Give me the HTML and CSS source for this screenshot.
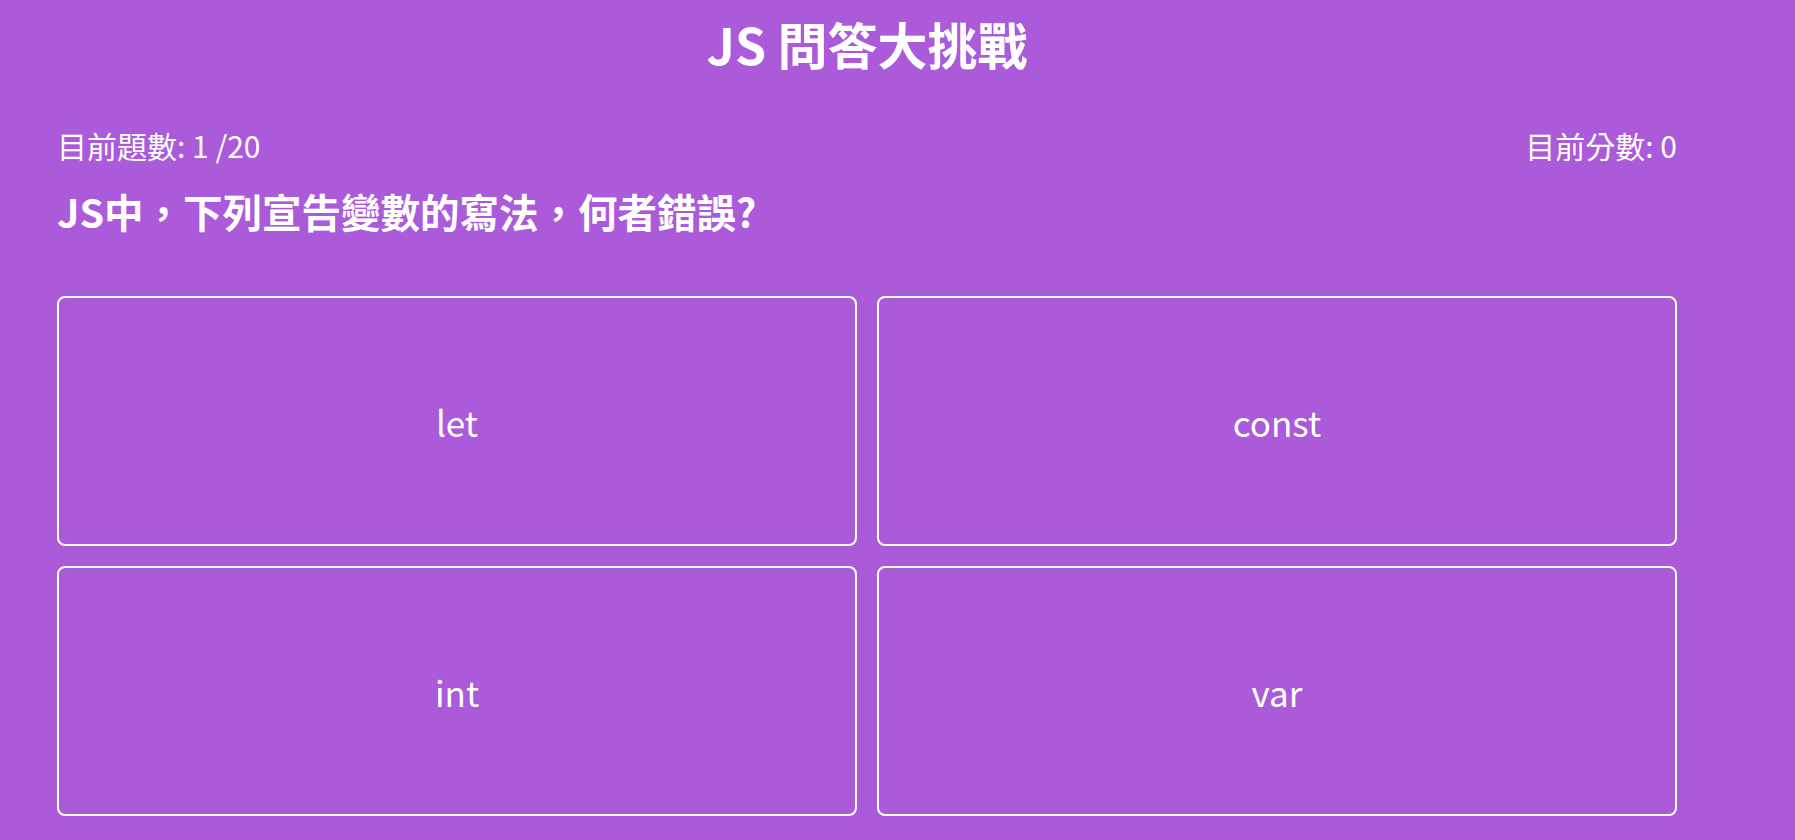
FILE: index.html
```html
<!DOCTYPE html>
<html lang="zh-Hant">
<head>
<meta charset="utf-8">
<title>JS 問答大挑戰</title>
<link rel="stylesheet" href="styles.css">
</head>
<body>
<div class="app">
  <h1 class="title">JS 問答大挑戰</h1>
  <div class="info">
    <span class="count">目前題數: 1 /20</span>
    <span class="score">目前分數: 0</span>
  </div>
  <h2 class="question">JS中，下列宣告變數的寫法，何者錯誤?</h2>
  <div class="options">
    <button class="option">let</button>
    <button class="option">const</button>
    <button class="option">int</button>
    <button class="option">var</button>
  </div>
</div>
</body>
</html>
```

FILE: styles.css
```css
html, body {
  margin: 0;
  padding: 0;
  background: #ab5ad9;
  height: 100%;
}
body {
  font-family: "Noto Sans CJK TC", "Noto Sans", sans-serif;
  color: #ffffff;
  overflow: hidden;
}
.app {
  width: 1620px;
  margin-left: 57px;
}
.title {
  margin: 7px 0 0;
  font-size: 50px;
  font-weight: 700;
  text-align: center;
  line-height: 72px;
}
.info {
  display: flex;
  justify-content: space-between;
  margin-top: 45px;
  font-size: 30px;
  line-height: 43px;
}
.question {
  margin: 15px 0 0;
  font-size: 39.5px;
  font-weight: 700;
  line-height: 58px;
}
.options {
  margin-top: 56px;
  display: grid;
  grid-template-columns: 1fr 1fr;
  grid-auto-rows: 250px;
  gap: 20px;
}
.option {
  background: transparent;
  border: 2px solid #ffffff;
  border-radius: 8px;
  color: #ffffff;
  font-family: inherit;
  font-size: 35px;
  display: flex;
  align-items: center;
  justify-content: center;
  padding: 0;
}
```
